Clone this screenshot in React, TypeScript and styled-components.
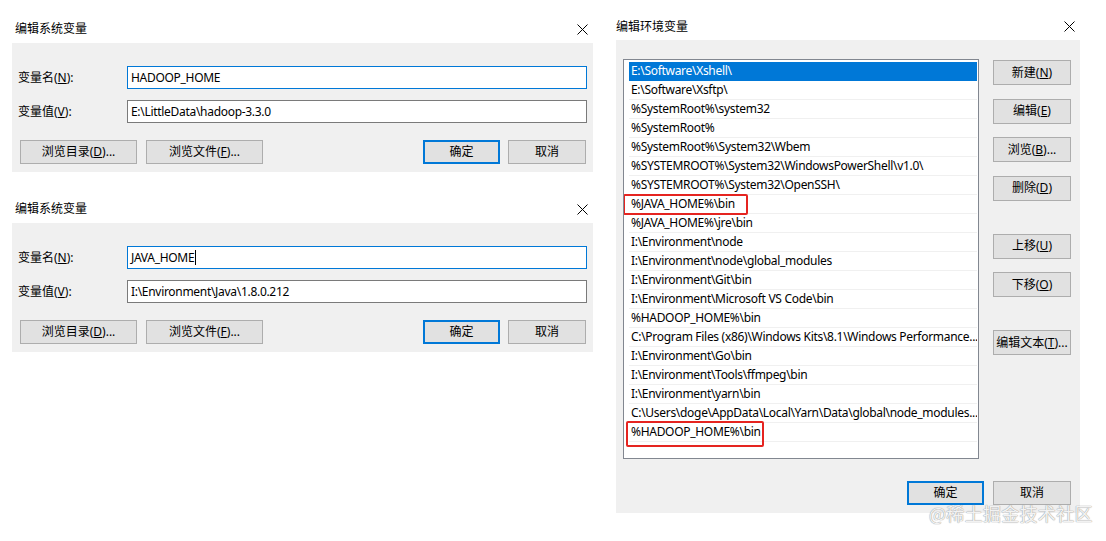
import React from "react";
import styled, { createGlobalStyle } from "styled-components";

const GlobalStyle = createGlobalStyle`
  html, body { margin: 0; padding: 0; background: #ffffff; }
  body {
    font-family: "Noto Sans", "Noto Sans CJK SC", sans-serif;
    font-size: 12px;
    color: #000;
  }
  * { box-sizing: border-box; }
`;

const Page = styled.div`
  position: relative;
  width: 1106px;
  height: 541px;
  display: flex;
  align-items: flex-start;
  gap: 23px;
  padding: 12px 0 0 12px;
  overflow: hidden;
`;

const LeftColumn = styled.div`
  width: 581px;
  display: flex;
  flex-direction: column;
  gap: 23px;
  padding-top: 3px;
`;

const Dialog = styled.div<{ $w: number }>`
  width: ${(p) => p.$w}px;
  display: flex;
  flex-direction: column;
`;

const Header = styled.div<{ $pl: number; $pt?: number }>`
  height: 28px;
  display: flex;
  align-items: center;
  justify-content: space-between;
  padding: ${(p) => p.$pt ?? 0}px 5px 0 ${(p) => p.$pl}px;
`;

const Title = styled.span`
  font-size: 12px;
  line-height: 16px;
`;

const Panel = styled.div`
  background: #f0f0f0;
  display: flex;
  flex-direction: column;
`;

const SmallPanel = styled(Panel)`
  height: 129px;
  padding: 23px 6px 8px 6px;
`;

const FieldGrid = styled.div`
  display: grid;
  grid-template-columns: 109px 1fr;
  row-gap: 11px;
  align-items: center;
`;

const Label = styled.span`
  line-height: 16px;
  u { text-decoration: underline; }
`;

const Field = styled.div<{ $focused?: boolean }>`
  height: 23px;
  background: #fff;
  border: 1px solid ${(p) => (p.$focused ? "#0078d7" : "#7a7a7a")};
  padding: 0 3px;
  display: flex;
  align-items: center;
  white-space: nowrap;
  line-height: 16px;
  letter-spacing: -0.3px;
`;

const Caret = styled.span`
  display: inline-block;
  width: 1px;
  height: 15px;
  margin-left: 1px;
  background: #000;
`;

const ButtonRow = styled.div`
  margin-top: 17px;
  display: flex;
  align-items: center;
  padding: 0 1px 0 2px;
`;

const Spacer = styled.div`
  flex: 1;
`;

const Btn = styled.div<{ $w: number; $h?: number; $default?: boolean; $ml?: number }>`
  width: ${(p) => p.$w}px;
  height: ${(p) => p.$h ?? 24}px;
  margin-left: ${(p) => p.$ml ?? 0}px;
  flex: none;
  background: #e1e1e1;
  border: ${(p) => (p.$default ? "2px solid #0078d7" : "1px solid #adadad")};
  display: flex;
  align-items: center;
  justify-content: center;
  line-height: 16px;
  white-space: nowrap;
`;

const CloseIcon = () => (
  <svg width="11" height="11" viewBox="0 0 11 11">
    <path d="M0.5 0.5 L10.5 10.5 M10.5 0.5 L0.5 10.5" stroke="#000" strokeWidth="1" fill="none" />
  </svg>
);

const BigPanel = styled(Panel)`
  height: 473px;
  padding: 19px 9px 8px 7px;
`;

const TopArea = styled.div`
  display: flex;
  gap: 14px;
`;

const List = styled.div`
  width: 356px;
  height: 400px;
  background: #fff;
  border: 1px solid #828790;
  padding: 2px 1px 0 5px;
  overflow: hidden;
`;

const Row = styled.div<{ $selected?: boolean }>`
  position: relative;
  height: 19px;
  border-bottom: 1px solid ${(p) => (p.$selected ? "#0078d7" : "#f0f0f0")};
  background: ${(p) => (p.$selected ? "#0078d7" : "transparent")};
  color: ${(p) => (p.$selected ? "#fff" : "#000")};
  padding-left: 2px;
  line-height: 18px;
`;

const RowText = styled.span`
  display: block;
  white-space: nowrap;
  overflow: hidden;
  letter-spacing: -0.3px;
`;

const Highlight = styled.div<{ $l: number; $t: number; $w: number; $h: number }>`
  position: absolute;
  left: ${(p) => p.$l}px;
  top: ${(p) => p.$t}px;
  width: ${(p) => p.$w}px;
  height: ${(p) => p.$h}px;
  border: 2px solid #e52420;
  border-radius: 2px;
  pointer-events: none;
`;

const SideButtons = styled.div`
  width: 78px;
  padding-top: 1px;
  display: flex;
  flex-direction: column;
  gap: 33px;
`;

const SideGroup = styled.div`
  display: flex;
  flex-direction: column;
  gap: 13.5px;
`;

const BottomRow = styled.div`
  margin-top: 22px;
  display: flex;
  justify-content: flex-end;
  gap: 9px;
`;

const Watermark = styled.div`
  position: absolute;
  left: 929px;
  top: 501px;
  font-family: "Noto Sans CJK SC", sans-serif;
  font-size: 18px;
  line-height: 24px;
  color: rgba(255, 255, 255, 0.9);
  text-shadow: 0 0 1px #9a9a9a, 0 0 1px #9a9a9a;
  letter-spacing: 0.3px;
`;

type Entry = { text: string; hl?: { l: number; t: number; w: number; h: number } };

const entries: Entry[] = [
  { text: "E:\\Software\\Xshell\\" },
  { text: "E:\\Software\\Xsftp\\" },
  { text: "%SystemRoot%\\system32" },
  { text: "%SystemRoot%" },
  { text: "%SystemRoot%\\System32\\Wbem" },
  { text: "%SYSTEMROOT%\\System32\\WindowsPowerShell\\v1.0\\" },
  { text: "%SYSTEMROOT%\\System32\\OpenSSH\\" },
  { text: "%JAVA_HOME%\\bin", hl: { l: -6, t: -1, w: 125, h: 21 } },
  { text: "%JAVA_HOME%\\jre\\bin" },
  { text: "I:\\Environment\\node" },
  { text: "I:\\Environment\\node\\global_modules" },
  { text: "I:\\Environment\\Git\\bin" },
  { text: "I:\\Environment\\Microsoft VS Code\\bin" },
  { text: "%HADOOP_HOME%\\bin" },
  { text: "C:\\Program Files (x86)\\Windows Kits\\8.1\\Windows Performance..." },
  { text: "I:\\Environment\\Go\\bin" },
  { text: "I:\\Environment\\Tools\\ffmpeg\\bin" },
  { text: "I:\\Environment\\yarn\\bin" },
  { text: "C:\\Users\\doge\\AppData\\Local\\Yarn\\Data\\global\\node_modules..." },
  { text: "%HADOOP_HOME%\\bin", hl: { l: -3, t: -2, w: 138, h: 26 } },
  { text: "" },
];

const VarDialog = ({ name, value, caret }: { name: string; value: string; caret?: boolean }) => (
  <Dialog $w={581}>
    <Header $pl={3}>
      <Title>编辑系统变量</Title>
      <CloseIcon />
    </Header>
    <SmallPanel>
      <FieldGrid>
        <Label>
          变量名(<u>N</u>):
        </Label>
        <Field $focused>
          {name}
          {caret && <Caret />}
        </Field>
        <Label>
          变量值(<u>V</u>):
        </Label>
        <Field>{value}</Field>
      </FieldGrid>
      <ButtonRow>
        <Btn $w={117}>
          浏览目录(<u>D</u>)...
        </Btn>
        <Btn $w={117} $ml={9}>
          浏览文件(<u>F</u>)...
        </Btn>
        <Spacer />
        <Btn $w={77} $default>
          确定
        </Btn>
        <Btn $w={78} $ml={8}>
          取消
        </Btn>
      </ButtonRow>
    </SmallPanel>
  </Dialog>
);

export default function App() {
  return (
    <>
      <GlobalStyle />
      <Page>
        <LeftColumn>
          <VarDialog name="HADOOP_HOME" value="E:\LittleData\hadoop-3.3.0" />
          <VarDialog name="JAVA_HOME" value="I:\Environment\Java\1.8.0.212" caret />
        </LeftColumn>
        <Dialog $w={464}>
          <Header $pl={0} $pt={1}>
            <Title>编辑环境变量</Title>
            <CloseIcon />
          </Header>
          <BigPanel>
            <TopArea>
              <List>
                {entries.map((e, i) => (
                  <Row key={i} $selected={i === 0}>
                    <RowText>{e.text}</RowText>
                    {e.hl && <Highlight $l={e.hl.l} $t={e.hl.t} $w={e.hl.w} $h={e.hl.h} />}
                  </Row>
                ))}
              </List>
              <SideButtons>
                <SideGroup>
                  <Btn $w={78} $h={25}>
                    新建(<u>N</u>)
                  </Btn>
                  <Btn $w={78} $h={25}>
                    编辑(<u>E</u>)
                  </Btn>
                  <Btn $w={78} $h={25}>
                    浏览(<u>B</u>)...
                  </Btn>
                  <Btn $w={78} $h={25}>
                    删除(<u>D</u>)
                  </Btn>
                </SideGroup>
                <SideGroup>
                  <Btn $w={78} $h={25}>
                    上移(<u>U</u>)
                  </Btn>
                  <Btn $w={78} $h={25}>
                    下移(<u>O</u>)
                  </Btn>
                </SideGroup>
                <SideGroup>
                  <Btn $w={78} $h={25}>
                    编辑文本(<u>T</u>)...
                  </Btn>
                </SideGroup>
              </SideButtons>
            </TopArea>
            <BottomRow>
              <Btn $w={77} $default>
                确定
              </Btn>
              <Btn $w={78}>取消</Btn>
            </BottomRow>
          </BigPanel>
        </Dialog>
        <Watermark>@稀土掘金技术社区</Watermark>
      </Page>
    </>
  );
}
